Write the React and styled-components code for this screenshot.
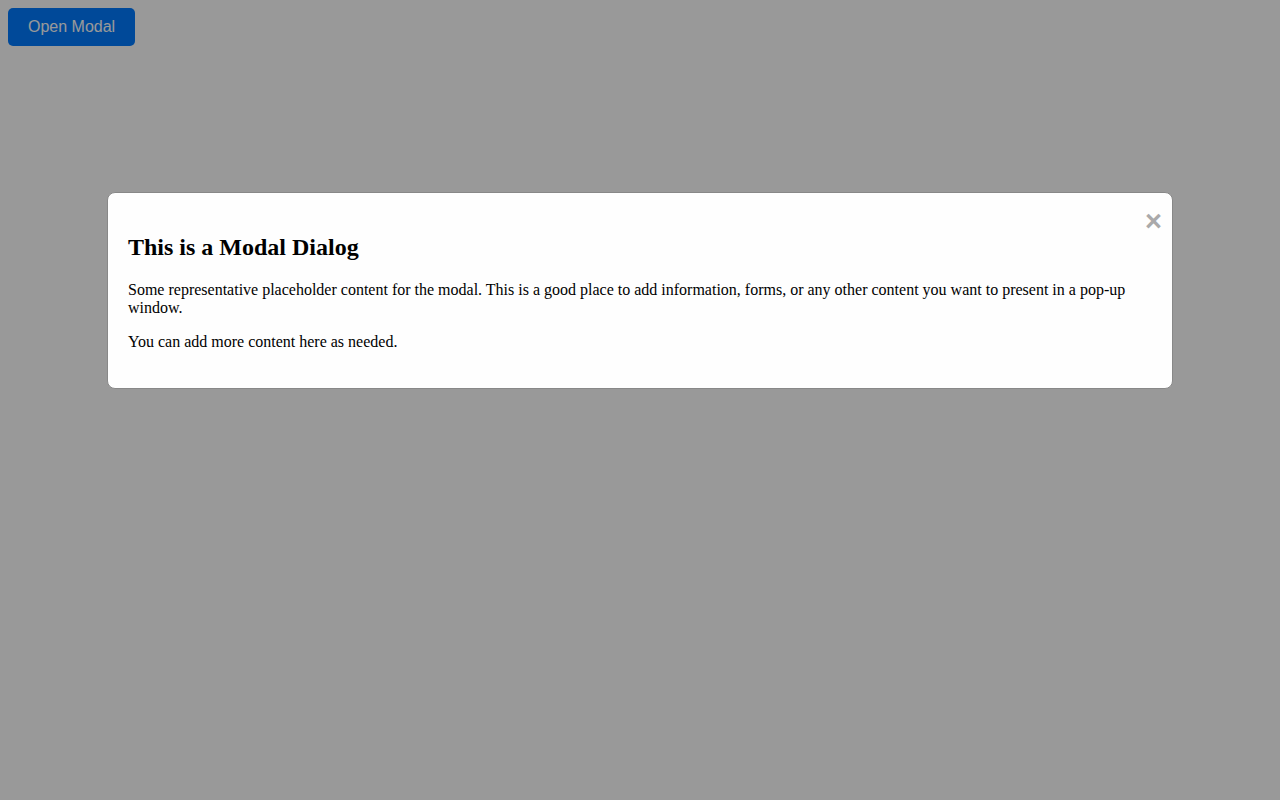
import React, {useState} from 'react'
import styled, {createGlobalStyle} from 'styled-components'

const GlobalStyle = createGlobalStyle`
  body{
    margin: 8px;
    font-family: "Liberation Serif", "Times New Roman", serif;
    background: #fff;
  }
`

const OpenButton = styled.button`
  padding: 10px 20px;
  font-family: "Liberation Sans", Arial, sans-serif;
  font-size: 16px;
  color: white;
  background: #007bff;
  border: none;
  border-radius: 5px;
  cursor: pointer;
`

const Overlay = styled.div`
  position: fixed;
  inset: 0;
  z-index: 10;
  overflow: auto;
  background: rgba(0, 0, 0, 0.4);
`

const Content = styled.div`
  position: relative;
  width: 80%;
  margin: 15% auto;
  padding: 21px 20px;
  background: #fefefe;
  border: 1px solid #888;
  border-radius: 8px;

  h2{
    margin: 0.83em 0;
    font-size: 24px;
  }
  p{
    margin: 1em 0;
    font-size: 16px;
    line-height: 18px;
  }
`

const Close = styled.span`
  position: absolute;
  top: 12px;
  right: 10px;
  color: #aaa;
  font-family: "Liberation Sans", Arial, sans-serif;
  font-size: 29px;
  font-weight: bold;
  line-height: 32px;
  cursor: pointer;
  &:hover{
    color: #000;
  }
`

const App = () => {
  const [open, setOpen] = useState(true)

  return (
    <>
      <GlobalStyle/>
      <OpenButton onClick={()=> setOpen(true)}>Open Modal</OpenButton>
      {open && (
        <Overlay onClick={()=> setOpen(false)}>
          <Content onClick={(e)=> e.stopPropagation()}>
            <Close onClick={()=> setOpen(false)}>&times;</Close>
            <h2>This is a Modal Dialog</h2>
            <p>Some representative placeholder content for the modal. This is a good place to add information, forms, or any other content you want to present in a pop-up window.</p>
            <p>You can add more content here as needed.</p>
          </Content>
        </Overlay>
      )}
    </>
  )
}

export default App
